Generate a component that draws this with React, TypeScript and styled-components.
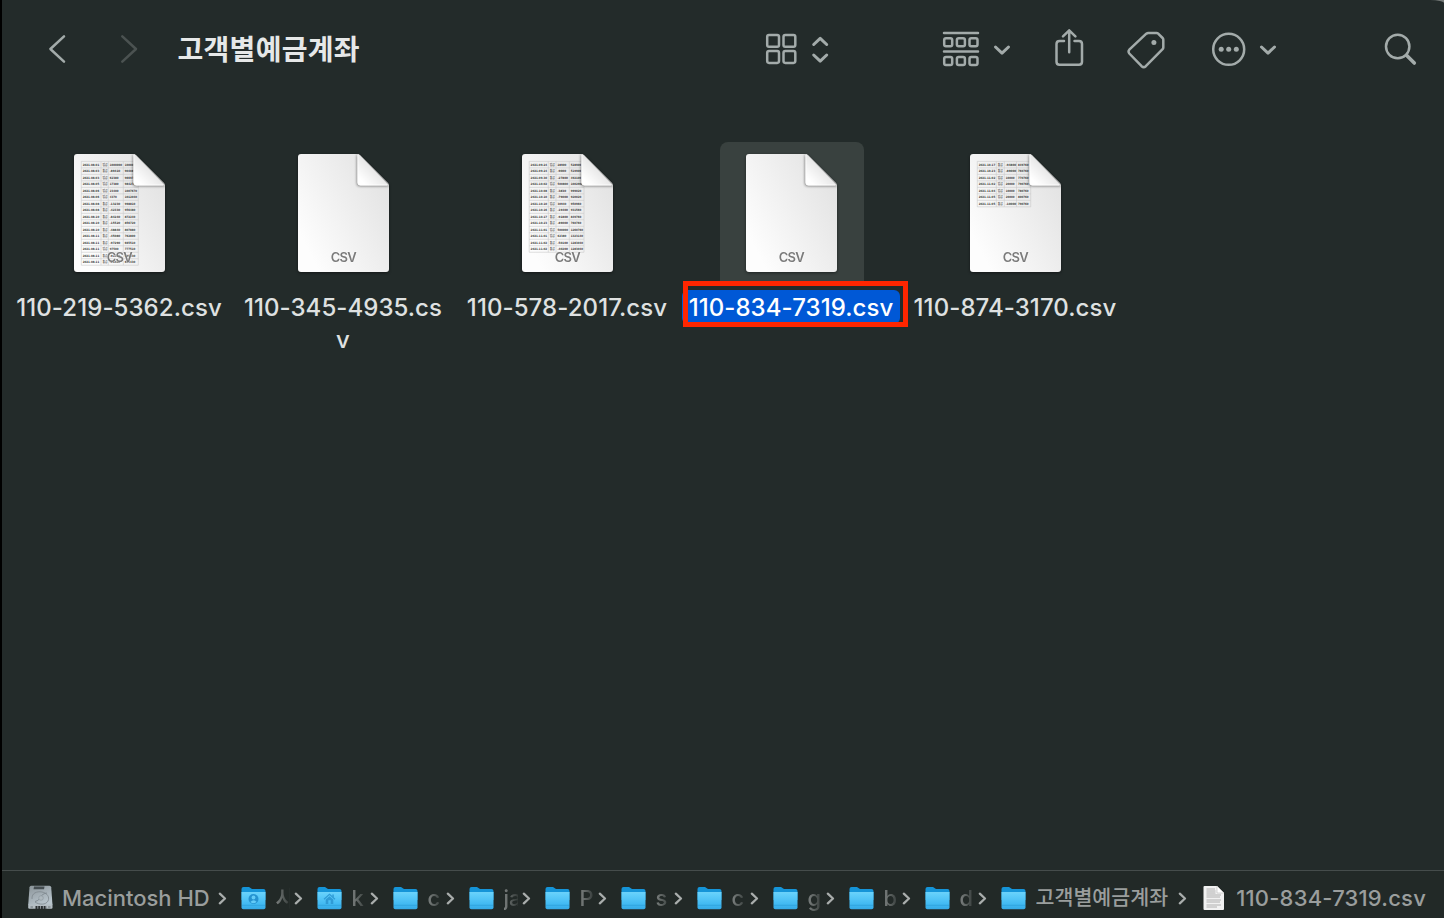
import React from "react";
import styled, { createGlobalStyle } from "styled-components";

const Global = createGlobalStyle`
  * { box-sizing: border-box; }
  body { margin: 0; background: #000; overflow: hidden; }
`;

const Desktop = styled.div`
  width: 1444px;
  height: 918px;
  padding-left: 2px;
  background: linear-gradient(90deg, #000 0 50%, #777c7b 50%);
`;

const FinderWindow = styled.main`
  display: flex;
  flex-direction: column;
  height: 100%;
  background: #232b2a;
  border-top-right-radius: 14px 3px;
  font-family: Inter, "Noto Sans CJK KR", sans-serif;
  font-weight: 500;
  overflow: hidden;
`;

const Toolbar = styled.header`
  display: flex;
  align-items: center;
  height: 98px;
  padding-left: 42px;
`;

const ToolButton = styled.button<{ $w: number; $gap?: number; $dim?: boolean }>`
  flex: none;
  width: ${(p) => p.$w}px;
  height: 40px;
  margin: 0 0 0 ${(p) => p.$gap ?? 0}px;
  padding: 0;
  border: 0;
  background: none;
  color: ${(p) => (p.$dim ? "#4b5251" : "#a3abaa")};

  svg {
    display: block;
    width: 100%;
    height: 100%;
    fill: none;
    stroke: currentColor;
    stroke-width: 2.5;
    stroke-linecap: round;
    stroke-linejoin: round;
  }
`;

const Title = styled.h1`
  flex: none;
  width: 200px;
  margin: 0 0 2px 33.5px;
  color: #e6e8e8;
  font: 700 28px/40px "Noto Sans CJK KR", sans-serif;
  letter-spacing: 0.3px;
  white-space: nowrap;
`;

const FileGrid = styled.section`
  flex: 1;
  display: grid;
  grid-template-columns: repeat(5, 224px);
  align-content: start;
  padding: 44px 0 0 6px;
`;

const FileItem = styled.figure`
  display: flex;
  flex-direction: column;
  align-items: center;
  margin: 0;
`;

const Thumb = styled.div<{ $selected?: boolean }>`
  width: 144px;
  height: 143px;
  padding: 12px 0 0 26px;
  border-radius: 8px 8px 3px 3px;
  background: ${(p) => (p.$selected ? "#39413f" : "transparent")};

  svg {
    display: block;
    overflow: visible;
    filter: drop-shadow(0 1px 1.5px rgba(0, 0, 0, 0.45));
  }
`;

const FileLabel = styled.figcaption<{ $spacing: number; $selected?: boolean }>`
  position: relative;
  margin: 5px 2px 0 0;
  padding: ${(p) => (p.$selected ? "2px 7px 0 7px" : "2px 0 0")};
  border-radius: 6px;
  background: ${(p) => (p.$selected ? "#0058d6" : "transparent")};
  color: ${(p) => (p.$selected ? "#fff" : "#dfe1e1")};
  font-size: 24px;
  line-height: 32px;
  letter-spacing: ${(p) => p.$spacing}px;
  text-align: center;
  white-space: pre;
`;

const Highlight = styled.span`
  position: absolute;
  left: 1px;
  top: -9px;
  width: 225px;
  height: 46px;
  border: 5px solid #ff2600;
`;

const PathBar = styled.footer`
  display: flex;
  align-items: center;
  height: 48px;
  padding: 7px 0 0 25.5px;
  border-top: 1px solid #454c4b;
  background: #222927;
  color: #9a9e9d;
  font-size: 22px;
`;

const Crumb = styled.div<{ $w: number }>`
  display: flex;
  flex: none;
  align-items: center;
  width: ${(p) => p.$w}px;

  > svg {
    flex: none;
    display: block;
  }
`;

const CrumbName = styled.span<{ $w: number; $fade?: boolean; $spacing?: number; $korean?: boolean; $gap?: number }>`
  flex: none;
  width: ${(p) => p.$w}px;
  margin-left: ${(p) => p.$gap ?? 9.5}px;
  overflow: hidden;
  line-height: 30px;
  font-size: ${(p) => (p.$korean ? 20.6 : 22)}px;
  letter-spacing: ${(p) => p.$spacing ?? 0}px;
  white-space: nowrap;
  mask-image: ${(p) => (p.$fade ? "linear-gradient(90deg, rgba(0,0,0,.75), rgba(0,0,0,.15))" : "none")};
`;

const SeparatorIcon = styled.svg<{ $gap: number }>`
  width: 9px;
  height: 14px;
  margin-left: ${(p) => p.$gap}px;
  fill: none;
  stroke: #a9adac;
  stroke-width: 2.3;
  stroke-linecap: round;
  stroke-linejoin: round;
`;

type Row = [string, string, string, string];
const rows = (text: string): Row[] => text.split("|").map((r) => r.split(" ") as Row);

const LEDGER_5362 = rows(
  "2021-08-01 입금 1000000 1000000|2021-08-03 출금 -89410 904089|2021-08-03 입금 62380 966970|2021-08-05 입금 17380 984270|2021-08-06 입금 23400 1007670|2021-08-06 입금 4370 1012040|2021-08-08 출금 -13230 998810|2021-08-08 출금 -42330 956480|2021-08-10 출금 -84240 872240|2021-08-10 출금 -15520 856720|2021-08-10 출금 -48840 807880|2021-08-11 출금 -45080 762800|2021-08-11 출금 -97290 665510|2021-08-11 입금 97500 777510|2021-08-11 출금 -91580 685930|2021-08-11 출금 -21500 664430"
);
const LEDGER_2017 = rows(
  "2021-09-24 입금 28900 528900|2021-09-24 출금 -9000 519900|2021-09-30 출금 -27800 492100|2021-10-02 입금 500800 1002900|2021-10-08 출금 -3830 999020|2021-10-10 출금 -79000 920020|2021-10-10 입금 30940 950960|2021-10-16 출금 -19400 931560|2021-10-17 출금 -91800 849760|2021-10-23 출금 -89000 760760|2021-11-01 입금 500000 1260760|2021-11-01 입금 62380 1323140|2021-11-02 출금 -50100 1283040|2021-11-02 출금 -40200 1283040"
);
const LEDGER_3170 = rows(
  "2021-10-17 출금 -94800 849760|2021-10-23 출금 -89000 760760|2021-11-02 입금 10000 770760|2021-11-02 입금 20000 790760|2021-11-04 입금 10000 780760|2021-11-05 입금 20000 800760|2021-11-05 출금 -10000 790760"
);

function DocumentIcon({ id, data = [], cols = [] }: { id: string; data?: Row[]; cols?: number[] }) {
  const top = 7.4;
  const pitch = 6.49;
  const bottom = Math.min(top + pitch * data.length, 112);
  return (
    <svg width="91" height="118" viewBox="0 0 91 118">
      <defs>
        <linearGradient id={`${id}p`} x1="1" y1="0.2" x2="0.1" y2="0.8">
          <stop offset="0" stopColor="#e2e2e2" />
          <stop offset="1" stopColor="#fdfdfd" />
        </linearGradient>
        <linearGradient id={`${id}f`} x1="0.7" y1="0.3" x2="0" y2="1">
          <stop offset="0" stopColor="#dcdcdc" />
          <stop offset="0.8" stopColor="#fff" />
        </linearGradient>
        <filter id={`${id}b`} x="-30%" y="-30%" width="160%" height="160%">
          <feGaussianBlur stdDeviation="1.8" />
        </filter>
        <clipPath id={`${id}c`}>
          <path d="M3 0H59Q61 0 62 1L90 29Q91 30 91 32V115Q91 118 88 118H3Q0 118 0 115V3Q0 0 3 0Z" />
        </clipPath>
      </defs>
      <g clipPath={`url(#${id}c)`}>
        <rect width="91" height="118" fill={`url(#${id}p)`} />
        {data.length > 0 && (
          <g stroke="#c9c9c9" strokeWidth="0.6">
            {cols.map((x) => (
              <path key={x} d={`M${x} ${top}V${bottom}`} />
            ))}
            {Array.from({ length: data.length + 1 }, (_, i) => (
              <path key={i} d={`M${cols[0]} ${top + i * pitch}H${cols[4]}`} />
            ))}
          </g>
        )}
        <g fontFamily='"DejaVu Sans", "Noto Sans CJK KR", sans-serif' fontSize="3" fontWeight="700" fill="#404040">
          {data.map((row, i) =>
            row.map((cell, c) => (
              <text
                key={`${i}-${c}`}
                x={cols[c] + 1.4}
                y={top + pitch * i + 4.3}
                textLength={c === 0 ? 16.5 : c === 1 ? 5 : cell.length * 1.75}
                lengthAdjust="spacingAndGlyphs"
              >
                {cell}
              </text>
            ))
          )}
        </g>
        <path d="M59 0V29Q59 32 62 32H92" fill="#000" opacity="0.55" filter={`url(#${id}b)`} />
        <path d="M59.5 0V28.5Q59.5 31.5 62.5 31.5H91L60.5 0Z" fill={`url(#${id}f)`} />
        <path d="M59.9 1V28.5Q59.9 31 62.5 31H89" fill="none" stroke="#fff" strokeWidth="0.8" />
      </g>
      <text
        x="45.7"
        y="108"
        textAnchor="middle"
        textLength="26"
        fontFamily="Inter, sans-serif"
        fontSize="13"
        fontWeight="600"
        fill="#7b7b7b"
        stroke="#fff"
        strokeWidth="1.2"
        paintOrder="stroke"
        strokeOpacity="0.5"
      >
        CSV
      </text>
    </svg>
  );
}

function FolderIcon({ mark }: { mark?: "user" | "home" }) {
  return (
    <svg width="25" height="24" viewBox="0 0 25 24">
      <defs>
        <linearGradient id="folderFront" x1="0" y1="0" x2="0" y2="1">
          <stop offset="0" stopColor="#68d2fc" />
          <stop offset="0.7" stopColor="#41b9f2" />
          <stop offset="1" stopColor="#35a9e6" />
        </linearGradient>
      </defs>
      <path d="M.5 3Q.5 1 2.5 1H8L11 3H22.5Q24.5 3 24.5 5V14H.5Z" fill="#1594d8" />
      <path d="M.5 6.5H24.5V21.5Q24.5 23.3 22.7 23.3H2.3Q.5 23.3 .5 21.5Z" fill="url(#folderFront)" />
      <path d="M.5 6.5H24.5" stroke="#7edcff" strokeWidth="0.7" />
      <path d="M1 19.3H24" stroke="#2d9eda" strokeWidth="0.7" />
      {mark === "user" && (
        <>
          <circle cx="12.5" cy="13" r="5" fill="#2592d0" />
          <circle cx="12.5" cy="11.5" r="1.9" fill="#63cbf7" />
          <path d="M9.4 16Q12.5 12.3 15.6 16Q12.5 18.5 9.4 16" fill="#63cbf7" />
        </>
      )}
      {mark === "home" && (
        <>
          <path d="M7 13.3L12.5 8.3L18 13.3" fill="none" stroke="#2f9bd6" strokeWidth="1.2" />
          <path
            d="M15.3 8.5H16.8V11.5L15.3 10.2ZM8.7 13.5L12.5 10.2L16.3 13.5V18H8.7ZM11.3 18H13.7V14.3H11.3Z"
            fill="#2f9bd6"
            fillRule="evenodd"
          />
        </>
      )}
    </svg>
  );
}

function DriveIcon() {
  return (
    <svg width="25" height="26" viewBox="0 0 25 26">
      <defs>
        <linearGradient id="driveBody" x1="0" y1="0" x2="0.6" y2="1">
          <stop offset="0" stopColor="#8b9499" />
          <stop offset="1" stopColor="#b9c5cd" />
        </linearGradient>
      </defs>
      <path d="M3 .8H21.5Q23 .8 23.2 2.3L24.5 20H.2L1.5 2.3Q1.7 .8 3 .8Z" fill="url(#driveBody)" />
      <path d="M.2 19.5H24.5V22.5Q24.5 23.7 23.3 23.7H1.5Q.2 23.7 .2 22.5Z" fill="#b4bdc3" />
      <path d="M6 1.5H16.5L16 4.3H5.5Z" fill="#454d51" />
      <path d="M4 14C3.5 8 9 6 14 7S22 12 20 16S11 20 7 17" fill="none" stroke="#7d878d" strokeWidth="0.8" />
      <path d="M19 8C11 9 14 15 7 16.5" fill="none" stroke="#7d878d" strokeWidth="0.9" />
      <circle cx="13" cy="13" r="2.3" fill="#aeb8be" stroke="#8a949a" strokeWidth="0.6" />
      <path d="M2.5 22H5M20 22H22.5" stroke="#6d767b" />
      <path d="M7.5 22.5H18.5" stroke="#2c3133" strokeWidth="3" strokeDasharray="2 0.7" />
    </svg>
  );
}

function TextFileIcon() {
  return (
    <svg width="22" height="26" viewBox="0 0 22 26">
      <path d="M1.5 1H14L21 8V24Q21 25 20 25H1.5Q.5 25 .5 24V2Q.5 1 1.5 1Z" fill="#f1f1f1" />
      <path
        d="M3.5 4H12M3.5 6H12.5M3.5 8H12.5M3.5 10H18M3.5 12H17M3.5 15H18M3.5 17H17M3.5 20H18M3.5 22H14"
        stroke="#a9a9a9"
        strokeWidth="0.9"
      />
      <path d="M14 1V8H21Z" fill="#fff" stroke="#bbb" strokeWidth="0.6" />
    </svg>
  );
}

function Separator({ gap }: { gap: number }) {
  return (
    <SeparatorIcon $gap={gap} viewBox="0 0 9 14">
      <path d="M1.8 2.7L7 7.5L1.8 12.3" />
    </SeparatorIcon>
  );
}

const FILES = [
  { name: "110-219-5362.csv", spacing: 0.08, data: LEDGER_5362, cols: [7.3, 27, 34.3, 49.3, 64.3] },
  { name: "110-345-4935.cs\nv", spacing: 0.05 },
  { name: "110-578-2017.csv", spacing: 0.08, data: LEDGER_2017, cols: [7.2, 26.3, 34, 47.3, 62] },
  { name: "110-834-7319.csv", spacing: 0.07, selected: true },
  { name: "110-874-3170.csv", spacing: 0.08, data: LEDGER_3170, cols: [7.3, 26.3, 34.3, 46.5, 60.7] },
];

const FOLDERS: { name: string; mark?: "user" | "home" }[] = [
  { name: "사", mark: "user" },
  { name: "k", mark: "home" },
  { name: "c" },
  { name: "ja" },
  { name: "P" },
  { name: "s" },
  { name: "c" },
  { name: "g" },
  { name: "b" },
  { name: "d" },
];

export default function App() {
  return (
    <Desktop>
      <Global />
      <FinderWindow>
        <Toolbar>
          <ToolButton $w={30} aria-label="Back">
            <svg viewBox="0 0 30 40"><path d="M20 7.3L6.4 20L20 32.7" /></svg>
          </ToolButton>
          <ToolButton $w={30} $gap={40} $dim aria-label="Forward">
            <svg viewBox="0 0 30 40"><path d="M8.3 7.3L22 20L8.3 32.7" /></svg>
          </ToolButton>
          <Title>고객별예금계좌</Title>
          <ToolButton $w={70} $gap={382.5} aria-label="View">
            <svg viewBox="0 0 70 40">
              <rect x="7.2" y="6" width="11.8" height="11.8" rx="1.8" />
              <rect x="23.5" y="6" width="11.8" height="11.8" rx="1.8" />
              <rect x="7.2" y="22.1" width="11.8" height="11.8" rx="1.8" />
              <rect x="23.5" y="22.1" width="11.8" height="11.8" rx="1.8" />
              <path d="M53.7 15.5L60.2 9.3L66.700 15.5M53.7 26L60.2 32.2L66.700 26" strokeWidth="3" />
            </svg>
          </ToolButton>
          <ToolButton $w={74} $gap={110} aria-label="Group">
            <svg viewBox="0 0 74 40">
              <path d="M4 4H38M4 22.5H38" />
              {[9.3, 28].map((y) =>
                [4.2, 16.9, 29.5].map((x) => <rect key={`${x}-${y}`} x={x} y={y} width="8" height="8" rx="1.8" />)
              )}
              <path d="M55.5 18L62 24.2L68.5 18" strokeWidth="3" />
            </svg>
          </ToolButton>
          <ToolButton $w={36} $gap={37} aria-label="Share">
            <svg viewBox="0 0 36 40">
              <path d="M13 12H8.5Q5.5 12 5.5 15V32.7Q5.5 35.7 8.5 35.7H28Q31 35.7 31 32.7V15Q31 12 28 12H23.5M18.2 23.3V1.5M12 7.3L18.2 1.3L24.4 7.3" />
            </svg>
          </ToolButton>
          <ToolButton $w={44} $gap={37} aria-label="Tags">
            <svg viewBox="0 0 44 40">
              <path d="M24.300 3.9H32.5Q33.5 3.9 34.2 4.6L38.6 9Q39.3 9.7 39.3 10.7V18.5Q39.3 19.5 38.6 20.2L21.8 37.2Q19.7 39 17.6 37.2L5.3 24.5Q3.8 22.6 5.3 20.7L22.300 4.7Q23.300 3.9 24.300 3.9Z" />
              <circle cx="29.9" cy="13.5" r="2.5" fill="currentColor" stroke="none" />
            </svg>
          </ToolButton>
          <ToolButton $w={74} $gap={38} aria-label="More">
            <svg viewBox="0 0 74 40">
              <circle cx="22.7" cy="20.3" r="15.5" />
              <g fill="currentColor" stroke="none">
                <circle cx="15.2" cy="20.3" r="2.5" />
                <circle cx="22.7" cy="20.3" r="2.5" />
                <circle cx="30.3" cy="20.3" r="2.5" />
              </g>
              <path d="M55.5 18L62 24.2L68.5 18" strokeWidth="3" />
            </svg>
          </ToolButton>
          <ToolButton $w={40} $gap={100} aria-label="Search">
            <svg viewBox="0 0 40 40">
              <circle cx="17.7" cy="17.5" r="11.7" />
              <path d="M26.5 26.3L34.3 34" strokeWidth="3.6" />
            </svg>
          </ToolButton>
        </Toolbar>
        <FileGrid>
          {FILES.map((f, i) => (
            <FileItem key={f.name}>
              <Thumb $selected={f.selected}>
                <DocumentIcon id={`doc${i}`} data={f.data} cols={f.cols} />
              </Thumb>
              <FileLabel $spacing={f.spacing} $selected={f.selected}>
                {f.name}
                {f.selected && <Highlight />}
              </FileLabel>
            </FileItem>
          ))}
        </FileGrid>
        <PathBar>
          <Crumb $w={213.5}>
            <DriveIcon />
            <CrumbName $w={148} $gap={9.4}>Macintosh HD</CrumbName>
            <Separator gap={8.3} />
          </Crumb>
          {FOLDERS.map((f, i) => (
            <Crumb key={i} $w={76}>
              <FolderIcon mark={f.mark} />
              <CrumbName $w={14.5} $fade>{f.name}</CrumbName>
              <Separator gap={4} />
            </Crumb>
          ))}
          <Crumb $w={202}>
            <FolderIcon />
            <CrumbName $w={134} $korean>고객별예금계좌</CrumbName>
            <Separator gap={8.5} />
          </Crumb>
          <Crumb $w={230}>
            <TextFileIcon />
            <CrumbName $w={196} $gap={11.2} $spacing={0.2}>110-834-7319.csv</CrumbName>
          </Crumb>
        </PathBar>
      </FinderWindow>
    </Desktop>
  );
}
